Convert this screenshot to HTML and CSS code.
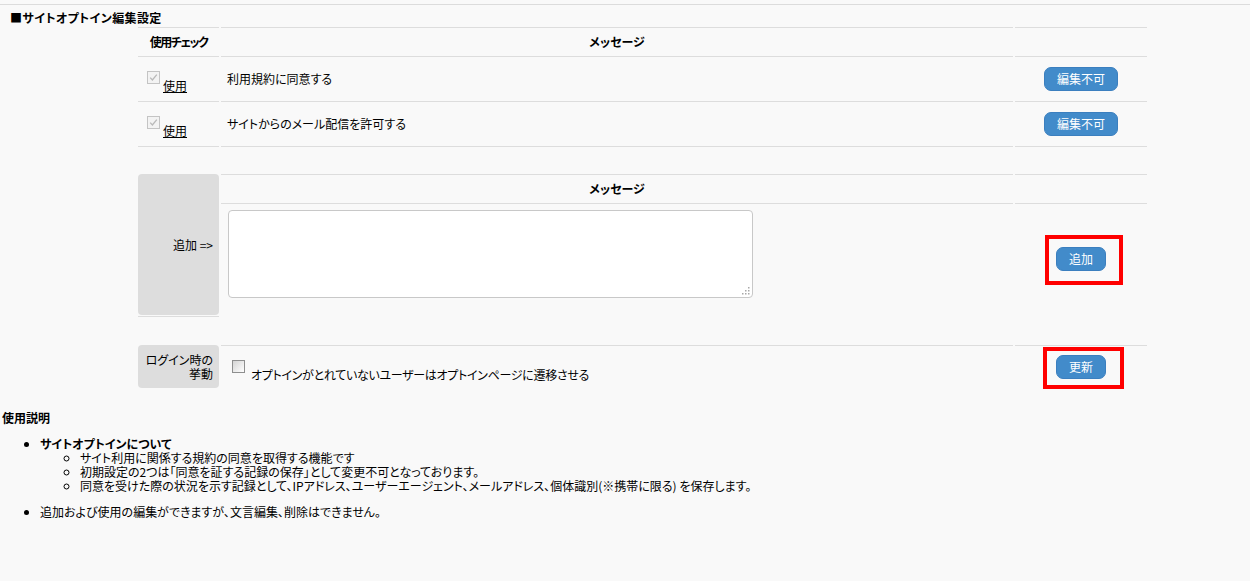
FILE: index.html
```html
<!DOCTYPE html>
<html lang="ja">
<head>
<meta charset="utf-8">
<title>サイトオプトイン編集設定</title>
<link rel="stylesheet" href="styles.css">
</head>
<body>
<div class="rule"></div>
<h2 class="title">■サイトオプトイン編集設定</h2>

<div class="grid">
  <div class="cell head head-use">使用チェック</div>
  <div class="cell head">メッセージ</div>
  <div class="cell head"></div>

  <div class="cell row use">
    <span class="cb-fixed"><svg width="13" height="13" viewBox="0 0 13 13"><rect x="0.5" y="0.5" width="12" height="12" fill="#f3f3f3" stroke="#c4c4c4"/><path d="M3.2 6.6 L5.4 9 L9.8 3.6" fill="none" stroke="#b9b9b9" stroke-width="1.3"/></svg></span>
    <a class="use-link" href="#">使用</a>
  </div>
  <div class="cell row msg">利用規約に同意する</div>
  <div class="cell row act"><button class="btn" type="button">編集不可</button></div>

  <div class="cell row use">
    <span class="cb-fixed"><svg width="13" height="13" viewBox="0 0 13 13"><rect x="0.5" y="0.5" width="12" height="12" fill="#f3f3f3" stroke="#c4c4c4"/><path d="M3.2 6.6 L5.4 9 L9.8 3.6" fill="none" stroke="#b9b9b9" stroke-width="1.3"/></svg></span>
    <a class="use-link" href="#">使用</a>
  </div>
  <div class="cell row msg">サイトからのメール配信を許可する</div>
  <div class="cell row act"><button class="btn" type="button">編集不可</button></div>
</div>

<div class="grid add-grid">
  <div class="add-side"><div class="gray add-label">追加 =&gt;</div></div>
  <div class="cell head">メッセージ</div>
  <div class="cell head"></div>
  <div class="cell add-input">
    <div class="ta-wrap">
      <textarea class="ta"></textarea>
      <svg class="grip" width="8" height="8" viewBox="0 0 8 8"><rect x="6" y="0" width="1.5" height="1.5" fill="#a8a8a8"/><rect x="3" y="3" width="1.5" height="1.5" fill="#a8a8a8"/><rect x="6" y="3" width="1.5" height="1.5" fill="#a8a8a8"/><rect x="0" y="6" width="1.5" height="1.5" fill="#a8a8a8"/><rect x="3" y="6" width="1.5" height="1.5" fill="#a8a8a8"/><rect x="6" y="6" width="1.5" height="1.5" fill="#a8a8a8"/></svg>
    </div>
  </div>
  <div class="cell act add-act"><span class="marked mark-add"><button class="btn" type="button">追加</button></span></div>
</div>

<div class="grid login-grid">
  <div class="gray login-label"><span class="ll">ログイン時の</span><span class="ll">挙動</span></div>
  <div class="cell top login-opt"><input type="checkbox" class="cb-login"><span class="login-text">オプトインがとれていないユーザーはオプトインページに遷移させる</span></div>
  <div class="cell top act"><span class="marked mark-update"><button class="btn" type="button">更新</button></span></div>
</div>

<h3 class="help-title">使用説明</h3>
<ul class="help">
  <li class="help-item"><strong>サイトオプトインについて</strong>
    <ul class="sub">
      <li>サイト利用に関係する規約の同意を取得する機能です</li>
      <li>初期設定の2つは「同意を証する記録の保存」として変更不可となっております。</li>
      <li>同意を受けた際の状況を示す記録として、IPアドレス、ユーザーエージェント、メールアドレス、個体識別(※携帯に限る) を保存します。</li>
    </ul>
  </li>
  <li>追加および使用の編集ができますが、文言編集、削除はできません。</li>
</ul>
</body>
</html>
```

FILE: styles.css
```css
body {
  margin: 0;
  background: #f9f9f9;
  color: #000;
  font-family: "Noto Sans CJK JP", "Noto Sans", sans-serif;
  font-size: 12px;
  line-height: 14px;
  font-feature-settings: "palt";
}

.rule {
  margin-top: 4px;
  height: 1px;
  background: #dcdcdc;
}

.title {
  margin: 6px 0 2px;
  padding-left: 10px;
  font-size: 12px;
  line-height: 14px;
  font-weight: bold;
  letter-spacing: 0.4px;
}

.grid {
  display: grid;
  grid-template-columns: 81px 792px 132px;
  column-gap: 2px;
  margin-left: 138px;
  width: 1009px;
}

.cell {
  display: flex;
  align-items: center;
  box-sizing: border-box;
}

.head {
  height: 30px;
  border-top: 1px solid #dddddd;
  border-bottom: 1px solid #dddddd;
  justify-content: center;
  font-weight: bold;
}

.head-use {
  letter-spacing: -1.5px;
}

.row {
  height: 45px;
  border-bottom: 1px solid #dddddd;
}

.use {
  align-items: flex-start;
  padding: 14px 0 0 9px;
}

.cb-fixed {
  display: block;
  width: 13px;
  height: 13px;
}

.cb-fixed svg {
  display: block;
}

.use-link {
  margin: 8px 0 0 3px;
  color: #000;
  text-decoration: underline;
}

.msg {
  padding-left: 6px;
}

.act {
  justify-content: center;
}

.btn {
  height: 24px;
  padding: 0 12px;
  margin: 0;
  border: 1px solid #3b7fbf;
  border-radius: 7px;
  background: #428bca;
  color: #fff;
  font-family: "Noto Sans CJK JP", "Noto Sans", sans-serif;
  font-size: 12px;
  line-height: 22px;
}

.marked {
  position: relative;
  display: inline-block;
}

.marked .btn {
  display: block;
}

.marked::after {
  content: "";
  position: absolute;
  border: 4px solid #ff0000;
  pointer-events: none;
}

.mark-add::after {
  left: -11px;
  right: -17px;
  top: -12px;
  bottom: -14px;
}

.mark-update::after {
  left: -13px;
  right: -18px;
  top: -8px;
  bottom: -10px;
}

/* add section */
.add-grid {
  margin-top: 27px;
}

.add-side {
  grid-row: span 2;
  box-sizing: border-box;
  height: 143px;
  padding-bottom: 1px;
  border-bottom: 1px solid #dddddd;
}

.gray {
  background: #dddddd;
  border-radius: 4px;
  box-sizing: border-box;
}

.add-label {
  height: 141px;
  display: flex;
  align-items: center;
  justify-content: flex-end;
  padding-right: 6px;
}

.add-input {
  height: 113px;
  align-items: flex-start;
  padding: 6px 0 0 7px;
}

.ta-wrap {
  position: relative;
}

.ta {
  display: block;
  width: 525px;
  height: 88px;
  box-sizing: border-box;
  margin: 0;
  border: 1px solid #c8c8c8;
  border-radius: 4px;
  background: #fff;
  resize: none;
}

.grip {
  position: absolute;
  right: 3px;
  bottom: 3px;
}

.add-act {
  height: 113px;
  padding-bottom: 3px;
}

/* login section */
.login-grid {
  margin-top: 28px;
}

.login-label {
  height: 43px;
  padding: 8px 6px 0 0;
  display: flex;
  flex-direction: column;
  align-items: flex-end;
}

.ll {
  display: block;
  height: 13px;
  line-height: 13px;
}

.ll + .ll {
  margin-top: 1px;
}

.top {
  height: 43px;
  border-top: 1px solid #dddddd;
}

.login-opt {
  align-items: flex-start;
  padding: 14px 0 0 11px;
}

.cb-login {
  appearance: none;
  -webkit-appearance: none;
  width: 13px;
  height: 13px;
  margin: 0;
  box-sizing: border-box;
  border: 1px solid #8e8f8f;
  background: linear-gradient(135deg, #d4d4d4 0%, #f2f2f2 70%, #ffffff 100%);
  flex: none;
}

.login-text {
  margin: 8px 0 0 6px;
  letter-spacing: -0.3px;
}

/* help */
.help-title {
  margin: 23px 0 0;
  padding-left: 2px;
  font-size: 12px;
  line-height: 14px;
  font-weight: bold;
}

.help {
  margin: 12px 0 0;
  padding-left: 40px;
  list-style: disc;
}

.help-item {
  margin-bottom: 12px;
}

.sub {
  margin: 0;
  padding-left: 40px;
  list-style: circle;
}
```
